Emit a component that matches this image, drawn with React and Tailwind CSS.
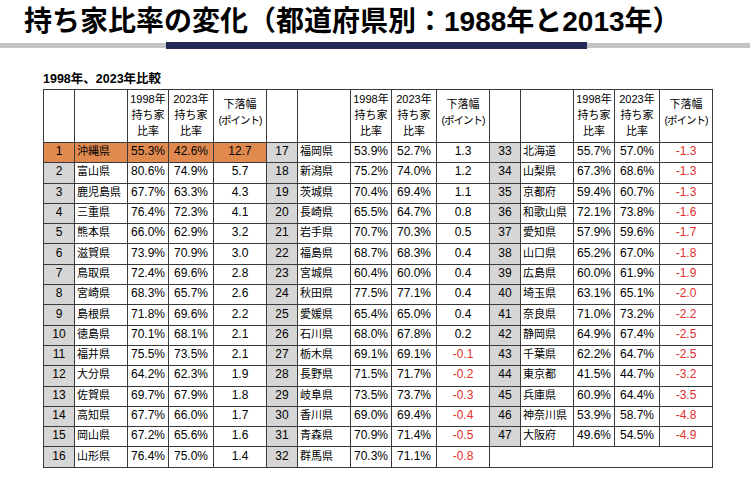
import React from "react";

const rows = [
  [
    ["1", "沖縄県", "55.3%", "42.6%", "12.7"],
    ["17", "福岡県", "53.9%", "52.7%", "1.3"],
    ["33", "北海道", "55.7%", "57.0%", "-1.3"],
  ],
  [
    ["2", "富山県", "80.6%", "74.9%", "5.7"],
    ["18", "新潟県", "75.2%", "74.0%", "1.2"],
    ["34", "山梨県", "67.3%", "68.6%", "-1.3"],
  ],
  [
    ["3", "鹿児島県", "67.7%", "63.3%", "4.3"],
    ["19", "茨城県", "70.4%", "69.4%", "1.1"],
    ["35", "京都府", "59.4%", "60.7%", "-1.3"],
  ],
  [
    ["4", "三重県", "76.4%", "72.3%", "4.1"],
    ["20", "長崎県", "65.5%", "64.7%", "0.8"],
    ["36", "和歌山県", "72.1%", "73.8%", "-1.6"],
  ],
  [
    ["5", "熊本県", "66.0%", "62.9%", "3.2"],
    ["21", "岩手県", "70.7%", "70.3%", "0.5"],
    ["37", "愛知県", "57.9%", "59.6%", "-1.7"],
  ],
  [
    ["6", "滋賀県", "73.9%", "70.9%", "3.0"],
    ["22", "福島県", "68.7%", "68.3%", "0.4"],
    ["38", "山口県", "65.2%", "67.0%", "-1.8"],
  ],
  [
    ["7", "鳥取県", "72.4%", "69.6%", "2.8"],
    ["23", "宮城県", "60.4%", "60.0%", "0.4"],
    ["39", "広島県", "60.0%", "61.9%", "-1.9"],
  ],
  [
    ["8", "宮崎県", "68.3%", "65.7%", "2.6"],
    ["24", "秋田県", "77.5%", "77.1%", "0.4"],
    ["40", "埼玉県", "63.1%", "65.1%", "-2.0"],
  ],
  [
    ["9", "島根県", "71.8%", "69.6%", "2.2"],
    ["25", "愛媛県", "65.4%", "65.0%", "0.4"],
    ["41", "奈良県", "71.0%", "73.2%", "-2.2"],
  ],
  [
    ["10", "徳島県", "70.1%", "68.1%", "2.1"],
    ["26", "石川県", "68.0%", "67.8%", "0.2"],
    ["42", "静岡県", "64.9%", "67.4%", "-2.5"],
  ],
  [
    ["11", "福井県", "75.5%", "73.5%", "2.1"],
    ["27", "栃木県", "69.1%", "69.1%", "-0.1"],
    ["43", "千葉県", "62.2%", "64.7%", "-2.5"],
  ],
  [
    ["12", "大分県", "64.2%", "62.3%", "1.9"],
    ["28", "長野県", "71.5%", "71.7%", "-0.2"],
    ["44", "東京都", "41.5%", "44.7%", "-3.2"],
  ],
  [
    ["13", "佐賀県", "69.7%", "67.9%", "1.8"],
    ["29", "岐阜県", "73.5%", "73.7%", "-0.3"],
    ["45", "兵庫県", "60.9%", "64.4%", "-3.5"],
  ],
  [
    ["14", "高知県", "67.7%", "66.0%", "1.7"],
    ["30", "香川県", "69.0%", "69.4%", "-0.4"],
    ["46", "神奈川県", "53.9%", "58.7%", "-4.8"],
  ],
  [
    ["15", "岡山県", "67.2%", "65.6%", "1.6"],
    ["31", "青森県", "70.9%", "71.4%", "-0.5"],
    ["47", "大阪府", "49.6%", "54.5%", "-4.9"],
  ],
  [
    ["16", "山形県", "76.4%", "75.0%", "1.4"],
    ["32", "群馬県", "70.3%", "71.1%", "-0.8"],
    null,
  ],
];

const cell = "border border-[#3a3a3a] h-[20.3px] p-0 leading-[14px] align-middle pb-[3px]";

const HeaderBlock = () => (
  <>
    <th className="border border-[#3a3a3a] p-0"></th>
    <th className="border border-[#3a3a3a] p-0"></th>
    <th className="border border-[#3a3a3a] p-0 pt-[1px] font-normal text-[11px] leading-[16px] align-top">
      1998年
      <br />
      持ち家
      <br />
      比率
    </th>
    <th className="border border-[#3a3a3a] p-0 pt-[1px] font-normal text-[11px] leading-[16px] align-top">
      2023年
      <br />
      持ち家
      <br />
      比率
    </th>
    <th className="border border-[#3a3a3a] p-0 pb-[8px] font-normal text-[11px] leading-[16px]">
      下落幅
      <br />
      <span className="text-[10.5px] tracking-[-1px]">(ポイント)</span>
    </th>
  </>
);

const DataBlock = ({ d }) => {
  if (!d) return <td colSpan={5} className={cell}></td>;
  const top = d[0] === "1";
  const neg = d[4].startsWith("-");
  return (
    <>
      <td className={`${cell} text-center ${top ? "bg-[#e08a4f]" : "bg-[#d6d6d6]"}`}>{d[0]}</td>
      <td className={`${cell} pl-[2px] text-[11px] whitespace-nowrap ${top ? "bg-[#e08a4f]" : ""}`}>{d[1]}</td>
      <td className={`${cell} text-center ${top ? "bg-[#e08a4f]" : ""}`}>{d[2]}</td>
      <td className={`${cell} text-center ${top ? "bg-[#e08a4f]" : ""}`}>{d[3]}</td>
      <td className={`${cell} text-center ${top ? "bg-[#e08a4f]" : ""} ${neg ? "text-[#e2302c]" : ""}`}>{d[4]}</td>
    </>
  );
};

const App = () => {
  const widths = [31, 53, 41, 45, 53];
  return (
    <div className="w-[750px] h-[487px] bg-white text-black font-['Liberation_Sans','Noto_Sans_CJK_JP',sans-serif] overflow-hidden">
      <h1 className="pl-[24px] pt-[5px] text-[28px] font-bold leading-[34px] whitespace-nowrap">
        持ち家比率の変化（都道府県別：1988年と2013年）
      </h1>
      <div className="mt-[3px] flex items-center h-[7px]">
        <div className="w-[166px] h-[5px] bg-[#c4c4c4]"></div>
        <div className="w-[421px] h-[7px] bg-[#232a55]"></div>
        <div className="flex-1 h-[5px] bg-[#c4c4c4]"></div>
      </div>
      <p className="ml-[43px] mt-[22px] text-[12.5px] font-bold leading-[16px]">1998年、2023年比較</p>
      <table className="ml-[43px] mt-[2px] w-[669px] table-fixed border-collapse text-[12px]">
        <colgroup>
          {[0, 1, 2].map((b) =>
            widths.map((w, i) => <col key={b + "-" + i} style={{ width: w }} />)
          )}
        </colgroup>
        <thead>
          <tr className="h-[53px]">
            <HeaderBlock />
            <HeaderBlock />
            <HeaderBlock />
          </tr>
        </thead>
        <tbody>
          {rows.map((r, i) => (
            <tr key={i}>
              <DataBlock d={r[0]} />
              <DataBlock d={r[1]} />
              <DataBlock d={r[2]} />
            </tr>
          ))}
        </tbody>
      </table>
    </div>
  );
};

export default App;
